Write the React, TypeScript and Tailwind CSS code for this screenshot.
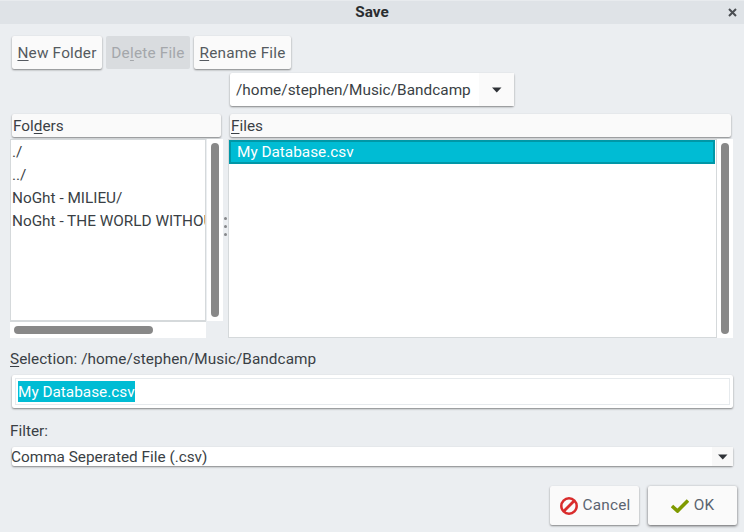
import React from "react";

const raised = "rounded-[2px] shadow-[0_1px_2px_rgba(0,0,0,0.45)]";

function U({ children }: { children: React.ReactNode }) {
  return <span className="underline underline-offset-2 decoration-1">{children}</span>;
}

function Arrow() {
  return (
    <svg width="10" height="6" viewBox="0 0 10 6">
      <path d="M0 0.5 H9.5 L4.75 5.5 Z" fill="#2f3237" />
    </svg>
  );
}

function Btn({ className, children }: { className: string; children: React.ReactNode }) {
  return (
    <div className={`h-[33px] pt-[1px] flex items-center justify-center tracking-[0.2px] ${raised} ${className}`}>
      {children}
    </div>
  );
}

function VScroll({ thumb, height }: { thumb: string; height: string }) {
  return (
    <div className={`w-[16px] bg-white pt-[4px] flex justify-center ${height}`}>
      <div className={`w-[8px] rounded-[4px] bg-[#888888] ${thumb}`} />
    </div>
  );
}

export default function App() {
  return (
    <div
      className="w-[744px] h-[532px] overflow-hidden flex flex-col bg-[#ebeef1] text-[#3a3f45] text-[15.33px] leading-[25px]"
      style={{ fontFamily: "Roboto, sans-serif" }}
    >
      <div className="h-[24px] shrink-0 bg-[#dfe3e7] border-t border-[#e8ebee] flex items-center justify-center relative">
        <span className="font-bold text-[#2a2d30]">Save</span>
        <svg className="absolute right-[7px] top-[7px]" width="9" height="9" viewBox="0 0 9 9">
          <path d="M1 1 L8 8 M8 1 L1 8" stroke="#4a4e52" strokeWidth="2" />
        </svg>
      </div>

      <div className="flex gap-[4px] mt-[12px] ml-[12px] text-[#555a60]">
        <Btn className="w-[90px] bg-[#fafafa]"><span><U>N</U>ew Folder</span></Btn>
        <Btn className="w-[84px] bg-[#d9dcdf] text-[#a4a7ab] !shadow-none"><span>De<U>l</U>ete File</span></Btn>
        <Btn className="w-[97px] bg-[#fafafa]"><span><U>R</U>ename File</span></Btn>
      </div>

      <div className={`mt-[4px] ml-[230px] w-[284px] h-[33px] flex bg-white ${raised}`}>
        <div className="flex-1 pl-[6px] pt-[1px] flex items-center text-[#3a3f45] tracking-[0.04px]">/home/stephen/Music/Bandcamp</div>
        <div className="w-[35px] bg-[#fafafa] flex items-center justify-center"><Arrow /></div>
      </div>

      <div className="mt-[8px] flex h-[224px]">
        <div className="w-[224px] shrink-0 flex flex-col pl-[10px]">
          <div className={`ml-[2px] w-[209px] h-[23px] shrink-0 pl-[1px] bg-[#fafafa] ${raised}`}>
            Fol<U>d</U>ers
          </div>
          <div className="mt-[2px] flex h-[183px] shrink-0">
            <div className="w-[196px] border-x border-t border-b-2 border-[#d5d9db] bg-white overflow-hidden whitespace-nowrap pl-[1px]">
              <div className="h-[23px]">./</div>
              <div className="h-[23px]">../</div>
              <div className="h-[23px]">NoGht - MILIEU/</div>
              <div className="h-[23px]">NoGht - THE WORLD WITHOUT US/</div>
            </div>
            <div className="w-[1px]" />
            <VScroll thumb="h-[174px]" height="h-[182px]" />
          </div>
          <div className="w-[196px] h-[16px] bg-white pl-[4px] pt-[4px]">
            <div className="w-[139px] h-[8px] rounded-[4px] bg-[#888888]" />
          </div>
        </div>

        <div className="w-[3px] shrink-0 flex flex-col items-center gap-[5px] pt-[103px] mr-[1px]">
          <div className="w-[3px] h-[3px] rounded-full bg-[#85888b]" />
          <div className="w-[3px] h-[3px] rounded-full bg-[#85888b]" />
          <div className="w-[3px] h-[3px] rounded-full bg-[#85888b]" />
        </div>

        <div className="flex-1 flex flex-col">
          <div className={`ml-[2px] w-[501px] h-[23px] shrink-0 pl-[1px] bg-[#fafafa] ${raised}`}>
            <U>F</U>iles
          </div>
          <div className="mt-[2px] flex flex-1">
            <div className="w-[489px] border border-[#d5d9db] bg-white">
              <div className="h-[24px] w-[486px] bg-[#00bcd4] border-2 border-[#0097a7] pl-[6px] text-white leading-[21px]">
                My Database.csv
              </div>
            </div>
            <VScroll thumb="h-[191px]" height="h-full" />
          </div>
        </div>
      </div>

      <div className="mt-[9px] ml-[10px] h-[23px] tracking-[0.05px]"><U>S</U>election: /home/stephen/Music/Bandcamp</div>

      <div className={`mt-[5px] ml-[12px] w-[721px] h-[33px] bg-white p-[3px] ${raised}`}>
        <div className="h-[27px] border border-[#e6eaed] pl-[2px] pt-[2px]">
          <div className="w-fit h-[21px] leading-[23px] bg-[#00bcd4] text-white">My Database.csv</div>
        </div>
      </div>

      <div className="mt-[11px] ml-[10px] h-[23px]">Filter:</div>

      <div className={`mt-[5px] ml-[12px] w-[721px] h-[19px] flex bg-white leading-[20px] ${raised}`}>
        <div className="flex-1 -ml-[1px]">Comma Seperated File (.csv)</div>
        <div className="w-[21px] bg-[#f8f8f8] flex items-center justify-center"><Arrow /></div>
      </div>

      <div className="mt-[20px] flex gap-[9px] ml-[550px] text-[#5b6470] tracking-[0.2px]">
        <div className={`w-[89px] h-[39px] pl-[1px] bg-[#fafafa] flex items-center justify-center gap-[5px] ${raised}`}>
          <svg width="18" height="18" viewBox="0 0 18 18">
            <circle cx="9" cy="9" r="7.7" fill="none" stroke="#d92c2c" strokeWidth="2.5" />
            <path d="M4 14 L14 4" stroke="#d92c2c" strokeWidth="2.8" />
          </svg>
          <span>Cancel</span>
        </div>
        <div className="w-[89px] h-[39px] bg-[#fafafa] flex items-center justify-center gap-[5px] shadow-[0_1px_3px_rgba(0,0,0,0.6)] rounded-[2px]">
          <svg width="18" height="14" viewBox="0 0 18 14">
            <path d="M1 7 L6.5 12 L17 1.5" fill="none" stroke="#7f9a00" strokeWidth="3.6" />
          </svg>
          <span>OK</span>
        </div>
      </div>
    </div>
  );
}
